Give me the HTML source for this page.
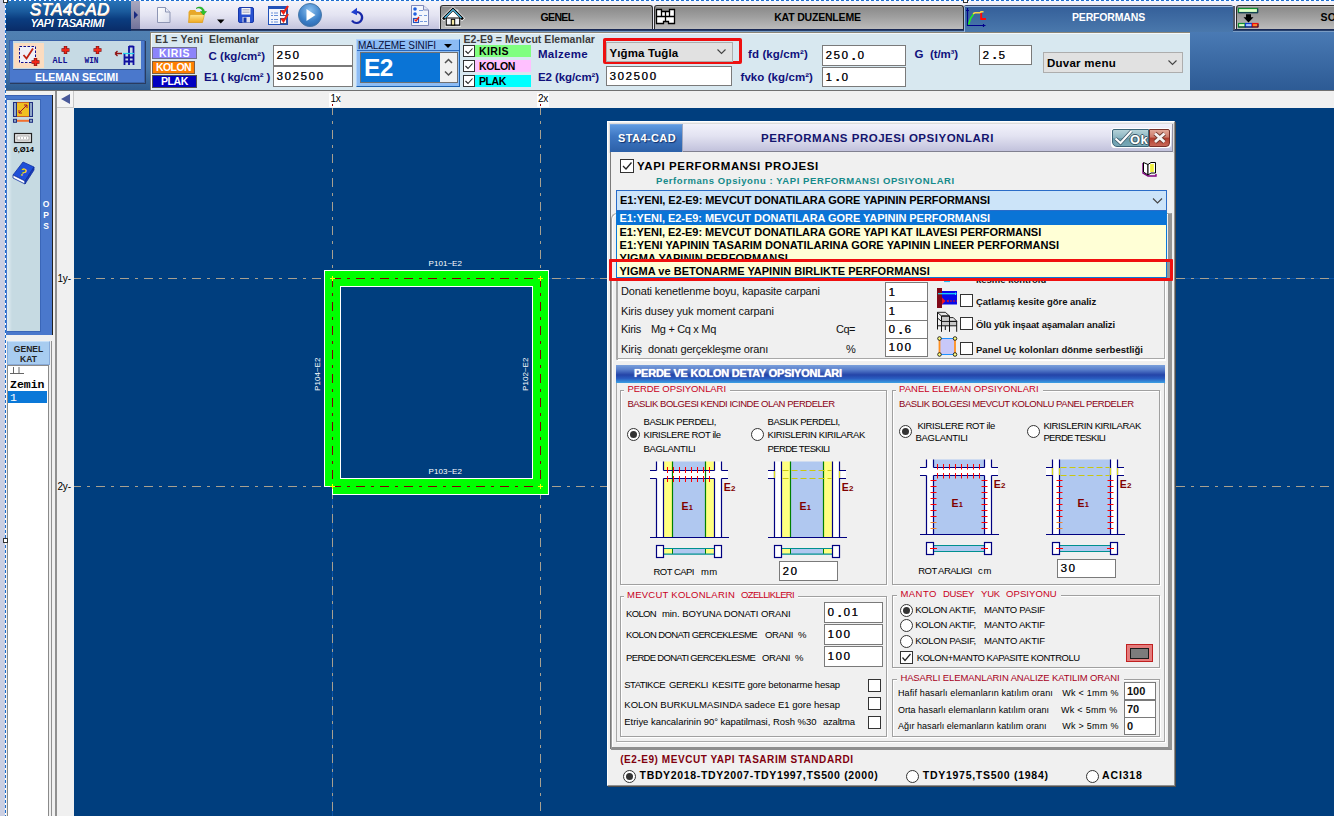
<!DOCTYPE html>
<html>
<head>
<meta charset="utf-8">
<title>STA4CAD</title>
<style>
*{box-sizing:border-box;margin:0;padding:0}
html,body{width:1334px;height:816px;overflow:hidden;background:#003a78;font-family:"Liberation Sans",sans-serif;font-size:11px;color:#000}
.a{position:absolute}
.t{position:absolute;white-space:nowrap;line-height:1}
.b{font-weight:bold}
.inp{position:absolute;background:#fff;border:1px solid #7a7a7a;font-family:"Liberation Sans",sans-serif;font-size:11.500px;letter-spacing:1.650px;line-height:1;white-space:nowrap;padding:0.800px 0 0 2.400px;display:flex;align-items:center;color:#111;text-shadow:0.3px 0 0 #333}
.inp i{font-style:normal;display:block;width:8px;text-align:center;letter-spacing:0;font-weight:bold;font-size:13px;margin-top:-1px}
.cb{position:absolute;width:12px;height:12px;background:#fff;border:1px solid #333}
.rd{position:absolute;width:13px;height:13px;background:#fff;border:1px solid #333;border-radius:50%}
.rd.on::after{content:"";position:absolute;left:2px;top:2px;width:7px;height:7px;border-radius:50%;background:#333}
.grp{position:absolute;border:1px solid #a0a0a0;box-shadow:1px 1px 0 #fff, inset 1px 1px 0 #fff}
.inp.sb{font-weight:bold;font-size:11px;padding:0 0 0 2px;letter-spacing:0;text-shadow:none}
.leg{position:absolute;background:#f0f0f0;color:#c00018;white-space:nowrap;line-height:1;padding:0 3px}
</style>
</head>
<body>
<!-- ================= TOP BAR ================= -->
<div class="a" id="top" style="left:0;top:0;width:1334px;height:91px;background:#3f6ea6"></div>
<div class="a" style="left:0;top:0;width:6px;height:816px;background:#cbcfe2"></div>
<div class="a" style="left:5px;top:0;width:1px;height:816px;background:repeating-linear-gradient(180deg,#1e6fd0 0 3px,#fff 3px 5px)"></div>
<div class="a" style="left:6px;top:0;width:1328px;height:1px;background:repeating-linear-gradient(90deg,#1e6fd0 0 3px,#fff 3px 5px)"></div>
<!-- logo -->
<div class="a" style="left:6px;top:1px;width:125px;height:30px;background:linear-gradient(180deg,#2a74b8 0%,#1a5a9c 35%,#0b3d80 60%,#0a2c68 100%)"></div>
<div class="t" style="left:29.500px;top:0.5px;font-size:17px;font-style:italic;color:#fff;letter-spacing:0.4px;text-shadow:0.5px 0 0 #fff,0.8px 0.6px 0 #e8c8a8">STA4CAD</div>
<div class="t" style="left:30.500px;top:17.500px;font-size:10.500px;font-style:italic;color:#fff;letter-spacing:-0.1px;text-shadow:0.3px 0 0 #fff">YAPI TASARIMI</div>
<div class="a" style="left:131px;top:1px;width:9px;height:29px;background:linear-gradient(180deg,#a8a8c0,#8888a8 60%,#70709a)"></div>
<div class="a" style="left:134px;top:11px;width:0;height:0;border-left:4px solid #1a2a80;border-top:4px solid transparent;border-bottom:4px solid transparent"></div>
<!-- icon toolbar -->
<div class="a" id="tb" style="left:140px;top:1px;width:300px;height:28px;background:linear-gradient(180deg,#f4f4fb 0%,#e4e4f2 50%,#c4c4de 100%)"></div>
<div class="a" style="left:131px;top:29px;width:1203px;height:2px;background:linear-gradient(180deg,#141e48,#2a4a78)"></div><div class="a" style="left:131px;top:31px;width:1203px;height:1px;background:#7a9cc4"></div>
<!-- tabs -->
<div class="a" id="tabs" style="left:440px;top:1px;width:894px;height:28px;background:linear-gradient(180deg,#f4f4fb 0%,#e4e4f2 50%,#c4c4de 100%)"></div>
<div class="a" style="left:440px;top:5px;width:213px;height:24px;border:1px solid #2c2c2c;border-bottom:0;border-radius:3px 3px 0 0;background:linear-gradient(180deg,#b4b4b4 0,#b4b4b4 1px,#8a8a8a 1px,#a0a0a0 50%,#bcbcbc);box-shadow:-1px 0 0 #e8e8f4,1px 0 0 #e8e8f4,0 -1px 0 #f4f4fa"></div>
<div class="a" style="left:654px;top:5px;width:310px;height:24px;border:1px solid #2c2c2c;border-bottom:0;border-radius:3px 3px 0 0;background:linear-gradient(180deg,#b4b4b4 0,#b4b4b4 1px,#8a8a8a 1px,#a0a0a0 50%,#bcbcbc);box-shadow:-1px 0 0 #e8e8f4,1px 0 0 #e8e8f4,0 -1px 0 #f4f4fa"></div>
<div class="a" style="left:964px;top:5px;width:269px;height:27px;border-top:1px solid #3a4a68;border-radius:2px 2px 0 0;background:linear-gradient(180deg,#98b8e0 0,#98b8e0 1px,#35609a 1px,#4a78ac 100%);box-shadow:inset 1px 0 0 #98b8e0"></div>
<div class="a" style="left:1236px;top:5px;width:104px;height:24px;border:1px solid #2c2c2c;border-bottom:0;border-radius:3px 3px 0 0;background:linear-gradient(180deg,#b4b4b4 0,#b4b4b4 1px,#8a8a8a 1px,#a0a0a0 50%,#bcbcbc);box-shadow:-1px 0 0 #e8e8f4,1px 0 0 #e8e8f4,0 -1px 0 #f4f4fa"></div>
<div class="a" style="left:1233px;top:6px;width:2px;height:24px;background:#505868"></div>
<!-- toolbar icons -->
<svg class="a" style="left:140px;top:0" width="300" height="32" viewBox="0 0 300 32">
<defs>
<linearGradient id="gdoc" x1="0" y1="0" x2="1" y2="1"><stop offset="0" stop-color="#fff"/><stop offset="1" stop-color="#d8dcec"/></linearGradient>
<linearGradient id="gfold" x1="0" y1="0" x2="0" y2="1"><stop offset="0" stop-color="#ffe890"/><stop offset="1" stop-color="#f0a820"/></linearGradient>
<radialGradient id="gplay" cx="0.5" cy="0.3" r="0.8"><stop offset="0" stop-color="#8cc0ee"/><stop offset="0.6" stop-color="#3c80c8"/><stop offset="1" stop-color="#2a60a8"/></radialGradient>
</defs>
<!-- new doc -->
<path d="M17.5 7.5 h8 l4.5 4.500 v10.500 h-12.500 z" fill="url(#gdoc)" stroke="#8e96b4" stroke-width="1"/>
<path d="M25.500 7.500 v4.500 h4.500" fill="#e8ecf8" stroke="#8e96b4" stroke-width="1"/>
<!-- folder -->
<path d="M48.500 12 l1.500 -2 h5 l1.500 2 h6 v10.500 h-14 z" fill="#e8a828"/>
<path d="M50 14.500 h14.500 l-2 8 h-14 z" fill="url(#gfold)" stroke="#d89818" stroke-width="0.600"/>
<path d="M56 8.500 c3 -1.500 6 0 6.500 3 h-2 l3 3.500 l3 -3.500 h-2 c-0.500 -4 -5 -6 -8.500 -3 z" fill="#28c828" stroke="#189018" stroke-width="0.500"/>
<path d="M77 19.500 h7.500 l-3.750 4 z" fill="#000"/>
<!-- save -->
<rect x="98.500" y="7.500" width="15" height="15" rx="1.500" fill="#2850d0" stroke="#1838a8"/>
<rect x="101.500" y="8" width="9" height="6.500" fill="#f4f4f8"/>
<path d="M102.500 9.500h7M102.500 11h7M102.500 12.500h7" stroke="#a8a8b8" stroke-width="0.700"/>
<rect x="102.500" y="17" width="7.500" height="5.500" fill="#e0e0ec"/>
<rect x="103.500" y="17.500" width="3" height="5" fill="#1838a8"/>
<!-- checklist -->
<rect x="128.500" y="6.500" width="19" height="18" fill="#f4f6fc" stroke="#2050b8"/>
<rect x="128" y="6" width="20" height="3" fill="#2050b8"/>
<path d="M131 13h2M134 13h4M131 15.500h2M134 15.500h4M131 19.500h2M134 19.500h4M131 22h2M134 22h4" stroke="#6890d8" stroke-width="1"/>
<rect x="140.500" y="10.500" width="6" height="5" fill="#fff" stroke="#405080"/>
<rect x="140.500" y="18.500" width="6" height="5" fill="#fff" stroke="#405080"/>
<path d="M141.500 10.500 l2 2.500 l4.500 -7" fill="none" stroke="#f02010" stroke-width="2.200"/>
<path d="M141.500 18.500 l2 2.500 l4.500 -7" fill="none" stroke="#f02010" stroke-width="2.200"/>
<!-- play -->
<circle cx="170" cy="15" r="11.500" fill="url(#gplay)" stroke="#4878a8" stroke-width="1"/>
<path d="M166.500 9 l9 6 l-9 6 z" fill="#fff"/>
<!-- undo -->
<path d="M216.500 12 a5.500 5.500 0 1 1 -4.500 8.500" fill="none" stroke="#1828a8" stroke-width="2.200"/>
<path d="M211 12.200 l6 -4.400 v7.500 z" fill="#2040d0"/>
<!-- checklist doc -->
<path d="M271.500 5.500 h12 l5 4.500 v15.500 h-17 z" fill="#f4f6fc" stroke="#8088b8"/>
<path d="M283.500 5.500 v4.500 h5" fill="#e0e4f4" stroke="#8088b8"/>
<circle cx="275" cy="9" r="1.800" fill="#2060e0"/><circle cx="275" cy="14" r="1.800" fill="#2060e0"/>
<path d="M279 10.500h4M279 15.500h3M284 15.500h3M280 21.500h3M284 21.500h3" stroke="#6890d8" stroke-width="0.900"/>
<rect x="273.500" y="18.500" width="5" height="4" fill="#fff" stroke="#2050c0" stroke-width="1.200"/>
<path d="M274.500 19.500 l1.500 1.500 l3 -4" fill="none" stroke="#f02010" stroke-width="1.300"/>
</svg>
<!-- tab icons -->
<svg class="a" style="left:440px;top:4px" width="30" height="26" viewBox="0 0 30 26">
<rect x="15" y="6" width="3" height="5" fill="#e8e8e8" stroke="#fff" stroke-width="0.600"/>
<path d="M6.200 14 h13.600 v7.200 h-13.600 z" fill="#fff" stroke="#fff" stroke-width="2.400"/>
<path d="M4 14.200 l9 -9 l9 9" fill="none" stroke="#fff" stroke-width="4.200" stroke-linecap="square"/>
<path d="M6.200 14 l6.800 -6.800 l6.800 6.800 z" fill="#fff"/><path d="M6.200 14 h13.600 v7.200 h-13.600 z" fill="#f4f6fa" stroke="#000" stroke-width="1.200"/>
<path d="M4 14.200 l9 -9 l9 9" fill="none" stroke="#000" stroke-width="2.800" stroke-linecap="square"/>
<path d="M4.600 14 l8.400 -8.400 l8.400 8.400" fill="none" stroke="#58c8f4" stroke-width="1.200"/>
<rect x="11.300" y="15.300" width="3.400" height="5.800" fill="#f4e8a0" stroke="#000" stroke-width="1"/>
</svg>
<svg class="a" style="left:654px;top:4px" width="30" height="26" viewBox="654 4 30 26">
<path d="M656.500 9.500H661.500V11.500H669.500V9.500H674.500V23.500H668.500V21.500H663.500V23.500H656.500Z" fill="#fff" stroke="#000" stroke-width="1.300"/>
<path d="M656.500 16.500H674.500M661.500 11.500V16.500M665.500 11.500V21.500M669.500 11.500V16.500" fill="none" stroke="#000" stroke-width="1.300"/>
</svg>
<svg class="a" style="left:964px;top:4px" width="30" height="28" viewBox="964 4 30 28">
<path d="M967.500 8V25.500H985.500M966 10.500h3M983.500 24v3" fill="none" stroke="#00008c" stroke-width="1.200"/>
<path d="M968.500 24.500 Q970 18 973.500 14" fill="none" stroke="#20f020" stroke-width="1.600"/>
<path d="M973 13.700 l2 -1 h5.500 l0.500 -1 h2.500" fill="none" stroke="#ffd848" stroke-width="1.600"/>
<path d="M981.200 13 V19 H986" fill="none" stroke="#ff0808" stroke-width="1.900"/>
</svg>
<svg class="a" style="left:1234px;top:4px" width="30" height="26" viewBox="1234 4 30 26">
<rect x="1238.500" y="8.500" width="19" height="4" fill="#e0ffc8" stroke="#109030" stroke-width="1.200"/>
<path d="M1238.500 12.800H1257.800V8.500" fill="none" stroke="#182860" stroke-width="1"/>
<path d="M1246 14.200h5v3h2.500l-5 5.200l-5 -5.200h2.500z" fill="#000"/>
<rect x="1238.500" y="23.500" width="6.500" height="3.500" fill="#e0ffc8" stroke="#109030" stroke-width="1.200"/>
<rect x="1245.500" y="23.500" width="6.500" height="3.500" fill="#a8c8ff" stroke="#1040d0" stroke-width="1.200"/>
<rect x="1252.500" y="23.500" width="5.500" height="3.500" fill="#ff8828" stroke="#e81010" stroke-width="1.200"/>
<path d="M1238.500 27H1258V24" fill="none" stroke="#101838" stroke-width="0.900"/>
</svg>
<!-- second row -->
<div class="a" style="left:6px;top:31px;width:144px;height:60px;background:linear-gradient(180deg,#5080b2 0%,#4a78aa 60%,#2c5a90 100%)"></div>
<div class="a" style="left:1190px;top:32px;width:144px;height:59px;background:linear-gradient(180deg,#4a7ab4,#2c5a94)"></div>
<div class="a" id="panel" style="left:150px;top:32px;width:1040px;height:58px;background:#d8e8f0;border-top:1px solid #8a8678;border-left:1px solid #8a8678;box-shadow:inset 1px 1px 0 #f4f8fa"></div>

<!-- ELEMAN SECIMI -->
<div class="a" style="left:9px;top:40px;width:136px;height:43px;background:#4a78cc;border:1px solid #3a62a8;box-shadow:1px 1px 0 #2a3c60"></div>
<div class="a" style="left:13px;top:41px;width:128px;height:29px;background:#c6dae4;border-bottom:1px solid #3a5a98"></div>
<div class="a" style="left:14px;top:43px;width:30px;height:25px;background:#fbdcc0"></div>
<svg class="a" style="left:13px;top:41px" width="129" height="29" viewBox="0 0 129 29">
<rect x="6.500" y="5.500" width="16" height="16" fill="#f0f0f8" stroke="#101090" stroke-dasharray="2.500 1.500"/>
<path d="M10.500 14 l3 3.500 l6.500 -10" fill="none" stroke="#c02010" stroke-width="1.800"/>
<path d="M22.500 17 v8 M18.500 21 h8" stroke="#801010" stroke-width="3.400"/>
<path d="M22.500 17.500 v7 M19 21 h7" stroke="#f02818" stroke-width="2"/>
<path d="M52.500 5 v8 M48.500 9 h8" stroke="#801010" stroke-width="3.400"/>
<path d="M52.500 5.500 v7 M49 9 h7" stroke="#f02818" stroke-width="2"/>
<path d="M84.500 5 v8 M80.500 9 h8" stroke="#801010" stroke-width="3.400"/>
<path d="M84.500 5.500 v7 M81 9 h7" stroke="#f02818" stroke-width="2"/>
<text x="39.500" y="22" font-family="Liberation Mono" font-size="9.500" font-weight="bold" fill="#101090" textLength="15" lengthAdjust="spacingAndGlyphs">ALL</text>
<text x="71.500" y="22" font-family="Liberation Mono" font-size="9.500" font-weight="bold" fill="#101090" textLength="14" lengthAdjust="spacingAndGlyphs">WIN</text>
<path d="M102 12.500 h7 M102 12.500 l2.500 -2.500 M102 12.500 l2.500 2.500" stroke="#901010" stroke-width="1.300" fill="none"/>
<path d="M111.500 24 v-12 M116 24 v-19 M120.500 24 v-19 M116 5.500 h4.500 M111 16.500 h10 M111 20.500 h10" stroke="#1010a0" stroke-width="1.800" fill="none"/>
<path d="M110 12.500 h11" stroke="#20d0e8" stroke-width="1.200"/>
</svg>
<!-- panel contents -->
<div class="a" style="left:152px;top:47px;width:45px;height:12px;background:#8c84fa;border:1px solid #707090"></div>
<div class="a" style="left:152px;top:61px;width:43px;height:13px;background:#ff7f00;border:1px solid #806040"></div>
<div class="a" style="left:152px;top:75px;width:45px;height:13px;background:#0000c0;border:1px solid #505050"></div>
<div class="inp" style="left:273px;top:45px;width:80px;height:21px">250</div>
<div class="inp" style="left:273px;top:66px;width:80px;height:21px">302500</div>
<!-- MALZEME SINIFI -->
<div class="a" style="left:356px;top:39px;width:104px;height:48px;background:#8cbcf4;border:1px solid #b4d4fc;border-bottom:1px solid #1a60b0;border-right:1px solid #1a60b0"></div>
<div class="a" style="left:357px;top:50px;width:102px;height:1px;background:#2a6ac0"></div>
<div class="a" style="left:444px;top:44px;width:0;height:0;border-top:4.500px solid #000;border-left:4.500px solid transparent;border-right:4.500px solid transparent"></div>
<div class="a" style="left:360px;top:52px;width:98px;height:31px;background:#0a74d6;border:1px solid #707070"></div>
<div class="a" style="left:440px;top:53px;width:17px;height:29px;background:#f0f0f0"></div>
<svg class="a" style="left:440px;top:53px" width="17" height="30"><path d="M5 10 l3.500 -3.500 l3.500 3.500 M5 18.500 l3.500 3.500 l3.500 -3.500" fill="none" stroke="#505050" stroke-width="1.500"/></svg>
<!-- E2-E9 -->
<div class="a" style="left:475px;top:45px;width:56px;height:12px;background:#80ff80"></div>
<div class="a" style="left:475px;top:60px;width:56px;height:12px;background:#ffc0ff"></div>
<div class="a" style="left:475px;top:75px;width:56px;height:12px;background:#00ffff"></div>
<div class="cb" style="left:463px;top:45px"></div><div class="cb" style="left:463px;top:60px"></div><div class="cb" style="left:463px;top:75px"></div>
<svg class="a" style="left:463px;top:45px" width="12" height="42"><path d="M2.500 6 l2.500 2.500 l4.500 -5 M2.500 21 l2.500 2.500 l4.500 -5 M2.500 36 l2.500 2.500 l4.500 -5" fill="none" stroke="#222" stroke-width="1.100"/></svg>
<div class="a" style="left:603px;top:38px;width:139px;height:26px;border:3px solid #ee1010;border-radius:2px"></div>
<div class="a" style="left:606px;top:42px;width:127px;height:20px;background:#e1e1e1;border:1px solid #adadad"></div>
<svg class="a" style="left:716px;top:47px" width="12" height="10"><path d="M1.500 2.500 l4 4 l4 -4" fill="none" stroke="#444" stroke-width="1.100"/></svg>
<div class="inp" style="left:606px;top:66px;width:126px;height:20px">302500</div>
<div class="inp" style="left:822px;top:45px;width:84px;height:21px">250<i>.</i>0</div>
<div class="inp" style="left:822px;top:67px;width:84px;height:20px">1<i>.</i>0</div>
<div class="inp" style="left:979px;top:45px;width:53px;height:20px">2<i>.</i>5</div>
<div class="a" style="left:1043px;top:52px;width:140px;height:21px;background:#e1e1e1;border:1px solid #adadad"></div>
<svg class="a" style="left:1167px;top:58px" width="12" height="10"><path d="M1.500 2.500 l4 4 l4 -4" fill="none" stroke="#444" stroke-width="1.100"/></svg>
<!--TOPTXT-->
<div class="t" style="left:155.0px;top:34.2px;font-size:10.5px;color:#3c3c3c;letter-spacing:0.20px;font-weight:bold">E1 = Yeni</div>
<div class="t" style="left:209.0px;top:34.2px;font-size:10.5px;color:#3c3c3c;letter-spacing:-0.02px;font-weight:bold">Elemanlar</div>
<div class="t" style="left:159.0px;top:47.7px;font-size:10.5px;color:#fff;letter-spacing:0.60px;font-weight:bold">KIRIS</div>
<div class="t" style="left:156.0px;top:62.2px;font-size:10.5px;color:#fff;letter-spacing:-0.58px;font-weight:bold">KOLON</div>
<div class="t" style="left:161.0px;top:76.2px;font-size:10.5px;color:#fff;letter-spacing:-0.40px;font-weight:bold">PLAK</div>
<div class="t" style="left:208.5px;top:51.2px;font-size:11.5px;color:#10107c;letter-spacing:0.03px;font-weight:bold">C (kg/cm²)</div>
<div class="t" style="left:204.0px;top:71.7px;font-size:11.5px;color:#10107c;letter-spacing:-0.18px;font-weight:bold">E1 ( kg/cm² )</div>
<div class="t" style="left:358.0px;top:40.9px;font-size:10px;color:#08103c;letter-spacing:-0.10px">MALZEME SINIFI</div>
<div class="t" style="left:364.0px;top:56.3px;font-size:24.5px;color:#fff;letter-spacing:-0.48px;font-weight:bold">E2</div>
<div class="t" style="left:463.5px;top:34.2px;font-size:10.5px;color:#3c3c3c;letter-spacing:0.04px;font-weight:bold">E2-E9 = Mevcut Elemanlar</div>
<div class="t" style="left:479.0px;top:45.7px;font-size:10.5px;color:#000;letter-spacing:0.40px;font-weight:bold">KIRIS</div>
<div class="t" style="left:479.0px;top:60.7px;font-size:10.5px;color:#000;letter-spacing:-0.38px;font-weight:bold">KOLON</div>
<div class="t" style="left:479.0px;top:75.7px;font-size:10.5px;color:#000;letter-spacing:-0.40px;font-weight:bold">PLAK</div>
<div class="t" style="left:538.0px;top:48.7px;font-size:11.5px;color:#10107c;letter-spacing:0.29px;font-weight:bold">Malzeme</div>
<div class="t" style="left:538.0px;top:72.2px;font-size:11.5px;color:#10107c;letter-spacing:-0.09px;font-weight:bold">E2 (kg/cm²)</div>
<div class="t" style="left:609.5px;top:48.0px;font-size:11.5px;color:#000;letter-spacing:0.12px;font-weight:bold">Yığma Tuğla</div>
<div class="t" style="left:748.0px;top:48.7px;font-size:11.5px;color:#10107c;letter-spacing:0.11px;font-weight:bold">fd (kg/cm²)</div>
<div class="t" style="left:740.5px;top:72.2px;font-size:11.5px;color:#10107c;letter-spacing:0.07px;font-weight:bold">fvko (kg/cm²)</div>
<div class="t" style="left:914.5px;top:48.7px;font-size:11.5px;color:#10107c;letter-spacing:0.55px;font-weight:bold">G</div>
<div class="t" style="left:930.0px;top:48.7px;font-size:11.5px;color:#10107c;letter-spacing:-0.12px;font-weight:bold">(t/m³)</div>
<div class="t" style="left:1047.0px;top:57.7px;font-size:11.5px;color:#000;letter-spacing:0.25px;font-weight:bold">Duvar menu</div>
<div class="t" style="left:1072.0px;top:12.0px;font-size:10.5px;color:#fff;letter-spacing:-0.17px;font-weight:bold">PERFORMANS</div>
<div class="t" style="left:1320.5px;top:12.0px;font-size:10.5px;color:#000;letter-spacing:0.16px;font-weight:bold">SO</div>
<div class="t" style="left:540.5px;top:12.0px;font-size:10.5px;color:#000;letter-spacing:-0.63px;font-weight:bold">GENEL</div>
<div class="t" style="left:774.2px;top:12.0px;font-size:10.5px;color:#000;letter-spacing:-0.19px;font-weight:bold">KAT DUZENLEME</div>
<div class="t" style="left:35.0px;top:71.7px;font-size:10.5px;color:#fff;letter-spacing:-0.03px;font-weight:bold">ELEMAN SECIMI</div>
<!--/TOPTXT-->
<!-- ================= WORK AREA ================= -->
<div class="a" style="left:6px;top:90px;width:1328px;height:18px;background:#f0f0f0;border-top:1px solid #707070"></div>
<div class="a" id="canvas" style="left:74px;top:108px;width:1260px;height:708px;background:#003e7e"></div>
<!-- left column -->
<div class="a" style="left:6px;top:91px;width:51px;height:725px;background:#f0f0f0"></div>
<div class="a" style="left:55px;top:91px;width:19px;height:725px;background:#f0f0f0;border-left:2px solid #909090"></div>
<div class="a" style="left:57px;top:91px;width:17px;height:17px;background:#f4f4f4;border:1px solid #c8c8c8;border-left:0;border-top:0"></div>
<div class="a" style="left:61px;top:94px;width:0;height:0;border-right:9.500px solid #4a5a9a;border-top:5.500px solid transparent;border-bottom:5.500px solid transparent"></div>
<div class="a" style="left:52px;top:95px;width:1px;height:240px;background:#202020"></div><div class="a" style="left:51px;top:341px;width:1px;height:475px;background:#909090"></div>
<!-- OPS -->
<div class="a" style="left:6px;top:95px;width:46px;height:240px;background:#4a78cc;border-top:1px solid #3a60b0"></div>
<div class="a" style="left:7px;top:99px;width:34px;height:233px;background:linear-gradient(90deg,#e4eef4 0,#c6dae2 5px,#c6dae2 100%);border:1px solid #3a66b8;border-left:0"></div>
<div class="t b" style="left:42px;top:199px;font-size:8.500px;color:#fff;line-height:11px;white-space:normal;width:8px;text-align:center">O P S</div>
<svg class="a" style="left:7px;top:99px" width="34" height="95" viewBox="0 0 34 95">
<rect x="6.500" y="3.500" width="19" height="14" fill="#f0c020" stroke="#c86020"/>
<rect x="6.500" y="3.500" width="3" height="14" fill="#90a8c8" stroke="#203080"/>
<rect x="22.500" y="3.500" width="3" height="14" fill="#90a8c8" stroke="#203080"/>
<path d="M12 14 l8 -8 M12 14 v-3 M12 14 h3 M20 6 v3 M20 6 h-3" stroke="#a01030" stroke-width="1" fill="none"/>
<path d="M9 21.800 h14" stroke="#f07030" stroke-width="2"/>
<rect x="6.500" y="20.300" width="3" height="3" fill="#90a8c8" stroke="#203080"/><rect x="22.500" y="20.300" width="3" height="3" fill="#90a8c8" stroke="#203080"/>
<rect x="7.500" y="34.500" width="17" height="9" fill="#e8e8e8" stroke="#222" stroke-width="1.200"/>
<rect x="10" y="37" width="12" height="4" fill="#fff" stroke="#999" stroke-width="0.800"/>
<path d="M13 39h1M16 39h1M19 39h1" stroke="#888" />
<text x="6.500" y="52.500" font-family="Liberation Sans" font-weight="bold" font-size="7.500" fill="#000">6,Ø14</text>
<path d="M6 76 l10 -13 l11 5 l-9 14 z" fill="#2050d8" stroke="#1030a0" stroke-width="0.800"/>
<path d="M6 76 l12 6 v3 l-12 -6 z" fill="#fff" stroke="#1030a0" stroke-width="0.800"/>
<path d="M18 82 l9 -14 v3 l-9 14 z" fill="#1838b8" stroke="#1030a0" stroke-width="0.800"/>
<text x="13" y="77" font-family="Liberation Sans" font-weight="bold" font-size="11" fill="#f0d020" transform="rotate(25 16 73)">?</text>
</svg>
<!-- GENEL KAT -->
<div class="a" style="left:7px;top:341px;width:43px;height:24px;background:#a8ccf0;border:1px solid #88aad8;border-top-color:#c8e0f8"></div>
<div class="t b" style="left:7px;top:344px;width:43px;text-align:center;font-size:8.500px;line-height:10px;white-space:normal;color:#222">GENEL KAT</div>
<div class="a" style="left:7px;top:365px;width:42px;height:451px;background:#fff;border:1px solid #8a8a8a;border-bottom:0"></div>
<div class="a" style="left:8px;top:391px;width:39px;height:12px;background:#0a78d8"></div>
<div class="t b" style="left:10px;top:379px;font-family:'Liberation Mono',monospace;font-size:11.500px;letter-spacing:0px">Zemin</div>
<div class="t" style="left:10px;top:392px;font-family:'Liberation Mono',monospace;font-size:11.500px;color:#fff">1</div>
<svg class="a" style="left:8px;top:366px" width="20" height="10"><path d="M2 7.500 h14 M5.500 1 v6.500 M11 1 v6.500" stroke="#555" stroke-width="0.900" fill="none"/></svg>
<div class="a" style="left:3px;top:538px;width:5px;height:5px;background:#fff;border:1px solid #333"></div>
<div class="a" style="left:3px;top:-2px;width:5px;height:5px;background:#fff;border:1px solid #333"></div>
<div class="a" style="left:963px;top:-2px;width:5px;height:5px;background:#fff;border:1px solid #333"></div>
<!-- ruler labels -->
<div class="a" style="left:329px;top:93px;width:11px;height:14px;background:#fff"></div><div class="a" style="left:332px;top:104px;width:1px;height:2px;background:#900"></div><div class="t" style="left:330.500px;top:93.500px;font-size:10px;letter-spacing:-0.3px">1x</div>
<div class="a" style="left:537px;top:93px;width:12px;height:14px;background:#fff"></div><div class="a" style="left:540px;top:104px;width:1px;height:2px;background:#900"></div><div class="t" style="left:538px;top:93.500px;font-size:10px;letter-spacing:-0.3px">2x</div>
<div class="t" style="left:57.500px;top:274px;font-size:10px;letter-spacing:-0.2px">1y-</div>
<div class="t" style="left:57.500px;top:482px;font-size:10px;letter-spacing:-0.2px">2y-</div>
<!-- canvas drawing -->
<svg class="a" style="left:74px;top:108px" width="1260" height="708" viewBox="74 108 1260 708" shape-rendering="crispEdges">
<g stroke="#0a52a4" stroke-width="1"><path d="M548 278.500H1334M332.500 494V816"/></g>
<g stroke="#a8a090" stroke-width="1" fill="none">
<path d="M74 278.500H1334" stroke-dasharray="9 6 3 6" stroke-dashoffset="2"/>
<path d="M74 486.500H1334" stroke-dasharray="9 6 3 6" stroke-dashoffset="2"/>
<path d="M332.500 108V816" stroke-dasharray="9 6 3 6" stroke-dashoffset="2"/>
<path d="M540.500 108V816" stroke-dasharray="9 6 3 6" stroke-dashoffset="2"/>
</g>
<path d="M324.500 270.500H548.500V494.500H332.500V486.500H324.500Z M340.500 286.500V478.500H532.500V286.500Z" fill="#00ff00" fill-rule="evenodd" stroke="#fff" stroke-width="1"/>
<g stroke="#800000" stroke-width="1" fill="none" stroke-dasharray="9 6 3 6">
<path d="M332 278.500H540"/><path d="M332 486.500H540"/><path d="M332.500 278V486"/><path d="M540.500 278V486"/>
</g>
<g stroke="#ffff00" stroke-width="1"><path d="M330 278.500h5M332.500 276v5M538 278.500h5M540.500 276v5M330 486.500h5M332.500 484v5M538 486.500h5M540.500 484v5"/></g>
</svg>
<div class="t" style="left:428.500px;top:259.500px;font-size:8px;color:#fff;letter-spacing:0.05px">P101~E2</div>
<div class="t" style="left:428.500px;top:467.500px;font-size:8px;color:#fff;letter-spacing:0.05px">P103~E2</div>
<div class="t" style="left:314px;top:391px;font-size:8px;color:#fff;letter-spacing:0.05px;transform:rotate(-90deg);transform-origin:0 0">P104~E2</div>
<div class="t" style="left:522px;top:391px;font-size:8px;color:#fff;letter-spacing:0.05px;transform:rotate(-90deg);transform-origin:0 0">P102~E2</div>
<!-- ================= DIALOG ================= -->
<!--DLG-->
<!-- dialog frame -->
<div class="a" style="left:607px;top:121px;width:568px;height:665px;background:#f0f0f0;border:1px solid #fff;border-right-color:#909090;border-bottom-color:#909090;box-shadow:1px 1px 0 #4c4c4c"></div>
<div class="a" style="left:609px;top:123px;width:565px;height:30px;border:1px solid #dcdcdc;border-bottom:0"></div>
<div class="a" style="left:610px;top:152px;width:1px;height:597px;background:#7a7a7a"></div>
<!-- title bar -->
<div class="a" style="left:611px;top:124px;width:562px;height:28px;border-right:1px solid #9090a0;background:linear-gradient(180deg,#f2f2fb 0%,#e2e2f1 45%,#c2c2dc 100%);border-bottom:1px solid #808090"></div>
<div class="a" style="left:610px;top:124px;width:73px;height:28px;background:linear-gradient(180deg,#5f9ae0 0%,#3f78c4 40%,#2c60a8 100%);border-right:1px solid #a0a8c0;border-top:1px solid #78a8e4"></div>
<!-- OK / X -->
<div class="a" style="left:1111px;top:128px;width:60px;height:20px;border:1px solid #fff;border-radius:3px;background:#fff"></div>
<div class="a" style="left:1112px;top:129px;width:37px;height:18px;border:1px solid #3c6478;border-radius:2px 0 0 5px;background:linear-gradient(180deg,#b4d2d8 0%,#8ab4c0 50%,#6a9cac 51%,#78a8b6 100%)"></div>
<div class="a" style="left:1149px;top:129px;width:21px;height:18px;border:1px solid #783028;border-radius:0 2px 4px 0;background:linear-gradient(180deg,#e0a898 0%,#cc7868 45%,#b03c2c 50%,#c86858 100%)"></div>
<svg class="a" style="left:1112px;top:128px" width="60" height="20" viewBox="0 0 60 20">
<path d="M3.500 10.500 l5 4.500 l11 -12" fill="none" stroke="#3c5868" stroke-width="3.400"/>
<path d="M3.500 10.500 l5 4.500 l11 -12" fill="none" stroke="#fff" stroke-width="2"/>
<path d="M43 5.500 l9.500 8.500 M52.500 5.500 l-9.500 8.500" stroke="#70382c" stroke-width="4.400"/>
<path d="M43 5.500 l9.500 8.500 M52.500 5.500 l-9.500 8.500" stroke="#f4f4f4" stroke-width="2.800"/>
</svg>
<div class="t b" style="left:1130px;top:133px;font-size:13px;color:#fff;letter-spacing:0.3px;text-shadow:1px 0 0 #3c5868,-1px 0 0 #3c5868,0 1px 0 #3c5868,0 -1px 0 #3c5868">Ok</div>
<!-- checkbox + book -->
<div class="cb" style="left:620px;top:159px;width:14px;height:14px;border-color:#333"></div>
<svg class="a" style="left:620px;top:159px" width="14" height="14"><path d="M3 7 l3 3 l5.500 -6.500" fill="none" stroke="#222" stroke-width="1.300"/></svg>
<svg class="a" style="left:1140px;top:160px" width="20" height="18" viewBox="0 0 20 18">
<path d="M3 3 v10 l5 3 h8 v-2" fill="none" stroke="#800080" stroke-width="1.400"/>
<path d="M3.500 2.500 l4.500 2 v10.500 l-4.500 -3 z" fill="#fff" stroke="#000" stroke-width="1"/>
<path d="M8 4.500 l3 -2 h4.500 v10.500 h-4.500 l-3 2 z" fill="#fff" stroke="#000" stroke-width="1"/>
<rect x="10" y="4" width="4" height="8" fill="#ffff60"/>
<path d="M10.500 5h3M10.500 7h3M10.500 9h3M10.500 11h3" stroke="#c8c800" stroke-width="0.600"/>
</svg>
<!-- upper group frame -->
<div class="a" style="left:611px;top:213px;width:561px;height:537px;border:1px solid #a0a0a0;border-right:4px solid #949494;border-bottom:3px solid #8e8e8e;border-radius:6px 0 0 0;box-shadow:inset 1px 1px 0 #fff"></div>
<div class="a" style="left:616px;top:216px;width:549px;height:144px;border:1px solid #a8a8a8;border-radius:5px 5px 0 0;box-shadow:1px 1px 0 #fff"></div>
<div class="a" style="left:617px;top:281px;width:548px;height:78px;border:1px solid #a8a8a8;border-top:0;box-shadow:1px 1px 0 #fff"></div>
<!-- combobox -->
<div class="a" style="left:616px;top:190px;width:551px;height:21px;background:#cce4f9;border:1px solid #2a6cc8"></div>
<svg class="a" style="left:1151px;top:196px" width="14" height="10"><path d="M2 2.500 l4.500 4.500 l4.500 -4.500" fill="none" stroke="#444" stroke-width="1.100"/></svg>
<!-- inputs (behind dropdown) -->
<div class="inp" style="left:885px;top:282px;width:43px;height:20px">1</div>
<div class="inp" style="left:885px;top:301px;width:43px;height:20px">1</div>
<div class="inp" style="left:885px;top:320px;width:43px;height:19px">0<i>.</i>6</div>
<div class="inp" style="left:885px;top:338px;width:43px;height:19px">100</div>
<div class="t b" style="left:976px;top:275px;font-size:9.500px;color:#111">kesme kontrolu</div>
<svg class="a" style="left:936px;top:276px" width="24" height="82" viewBox="936 276 24 82">
<rect x="937" y="288" width="5" height="20" fill="#800818"/>
<rect x="942" y="291" width="15" height="13.500" fill="#0808e8"/>
<path d="M938 293.700h18.500" stroke="#20e0f8" stroke-width="1.200"/><path d="M955.500 292.500v2.500" stroke="#20e0f8" stroke-width="1"/>
<path d="M942 297.500 l3.500 3.500 l-3.500 3.500z" fill="#f01020"/><path d="M947 301h10" stroke="#e01020" stroke-width="1" stroke-dasharray="2 1"/><path d="M946.500 301l2 -1.500v3z" fill="#e01020"/>
<path d="M941.500 316h8v4.800h-8zM941.500 322h15.200v3.600h-15.200z" fill="#c8c8c8"/>
<path d="M937.300 312.300h8l4.200 3.700h-8z M949.500 317.600h3.800l3.700 3.800h-7.500z" fill="#e4e4e4" stroke="#111" stroke-width="0.900"/>
<g fill="none" stroke="#111" stroke-width="1"><path d="M937.500 312.300V329.500M941.500 316V331.800M949.500 316V331.800M956.700 321.400V331.800M941.500 316H949.500M941.500 321.400H956.700M937.500 318l4 3.400M937.500 325.800H956.700M945.300 326v4"/></g>
<rect x="939.500" y="338.500" width="15.500" height="16" fill="#c8c8f8"/>
<path d="M939.500 338.500h15.500M939.500 354.500h15.500" stroke="#2090ff" stroke-width="1.200"/>
<path d="M939.500 338.500v16M955 338.500v16" stroke="#ff9020" stroke-width="1.800"/>
<g fill="#ffff80" stroke="#000" stroke-width="0.800"><circle cx="939.500" cy="338.500" r="1.800"/><circle cx="955" cy="338.500" r="1.800"/><circle cx="939.500" cy="354.500" r="1.800"/><circle cx="955" cy="354.500" r="1.800"/></g>
<path d="M944 281.500 h6" stroke="#20c0f8" stroke-width="1.200"/>
</svg>
<div class="cb" style="left:960px;top:294px;width:13px;height:13px"></div>
<div class="cb" style="left:960px;top:317px;width:13px;height:13px"></div>
<div class="cb" style="left:960px;top:342px;width:13px;height:13px"></div>
<!-- dropdown list -->
<div class="a" style="left:616px;top:211px;width:551px;height:68px;background:#ffffd6;border:1px solid #0a78d8;border-top:0"></div>
<div class="a" style="left:617px;top:211px;width:549px;height:14px;background:#0a74d6"></div>
<!-- section header -->
<div class="a" style="left:616px;top:365px;width:549px;height:18px;background:linear-gradient(180deg,#7aa0dc 0%,#5a80cc 25%,#2444a8 55%,#2a5cc0 75%,#3ca0e4 100%)"></div>
<!-- group frames -->
<div class="grp" style="left:620px;top:390px;width:267px;height:195px"></div>
<div class="grp" style="left:892px;top:390px;width:268px;height:195px"></div>
<div class="grp" style="left:620px;top:596px;width:267px;height:141px"></div>
<div class="grp" style="left:892px;top:595px;width:268px;height:73px"></div>
<div class="grp" style="left:892px;top:679px;width:268px;height:58px"></div>
<div class="a" style="left:616px;top:383px;width:549px;height:359px;border:1px solid #a8a8a8;border-top:0;box-shadow:1px 1px 0 #fff"></div>
<!-- radios -->
<div class="rd on" style="left:627px;top:428px"></div>
<div class="rd" style="left:751px;top:428px"></div>
<div class="rd on" style="left:899px;top:425px"></div>
<div class="rd" style="left:1027px;top:425px"></div>
<div class="rd on" style="left:900px;top:604px"></div>
<div class="rd" style="left:900px;top:619px"></div>
<div class="rd" style="left:900px;top:635px"></div>
<div class="rd on" style="left:623px;top:770px"></div>
<div class="rd" style="left:906px;top:770px"></div>
<div class="rd" style="left:1086px;top:770px"></div>
<!-- inputs -->
<div class="inp" style="left:779px;top:561px;width:59px;height:20px">20</div>
<div class="inp" style="left:1057px;top:559px;width:59px;height:19px">30</div>
<div class="inp" style="left:824px;top:602px;width:59px;height:21px">0<i>.</i>01</div>
<div class="inp" style="left:824px;top:624px;width:59px;height:21px">100</div>
<div class="inp" style="left:824px;top:646px;width:59px;height:21px">100</div>
<div class="cb" style="left:868px;top:679px;width:13px;height:13px"></div>
<div class="cb" style="left:868px;top:697px;width:13px;height:13px"></div>
<div class="cb" style="left:868px;top:716px;width:13px;height:13px"></div>
<div class="cb" style="left:900px;top:651px;width:13px;height:13px"></div>
<svg class="a" style="left:900px;top:651px" width="13" height="13"><path d="M2.500 6.500 l2.500 3 l5.500 -6.500" fill="none" stroke="#222" stroke-width="1.200"/></svg>
<div class="a" style="left:1126px;top:644px;width:27px;height:18px;background:#e47c7c;border:1px solid #c02020"></div>
<div class="a" style="left:1130px;top:648px;width:19px;height:11px;background:#7c7c7c;border:1px solid #1c1c1c"></div>
<div class="inp sb" style="left:1124px;top:682px;width:32px;height:18px">100</div>
<div class="inp sb" style="left:1124px;top:700px;width:32px;height:18px">70</div>
<div class="inp sb" style="left:1124px;top:717px;width:32px;height:18px">0</div>
<svg class="a" style="left:640px;top:450px" width="520" height="115" viewBox="640 450 520 115">
<rect x="656.5" y="461.5" width="7.0" height="76.0" fill="#fff"/>
<rect x="714.5" y="461.5" width="7.0" height="76.0" fill="#fff"/>
<rect x="663.5" y="461.5" width="9.0" height="76.0" fill="#ffff80"/>
<rect x="705.5" y="461.5" width="9.0" height="76.0" fill="#ffff80"/>
<rect x="672.5" y="461.5" width="33.0" height="76.0" fill="#b0c8f0"/>
<rect x="650" y="470.5" width="78" height="8.0" fill="#fff"/>
<path d="M672.5 461.5V537.5M705.5 461.5V537.5" stroke="#008000" stroke-width="1.200" fill="none"/>
<path d="M656.5 461.5V470.5M656.5 478.5V537.5M721.5 461.5V470.5M721.5 478.5V537.5M663.5 461.5V470.5M663.5 478.5V537.5M714.5 461.5V470.5M714.5 478.5V537.5" stroke="#000080" stroke-width="1.200" fill="none"/>
<path d="M650 470.5H656.5M650 478.5H656.5M663.5 470.5H714.5M663.5 478.5H714.5M721.5 470.5H728M721.5 478.5H728" stroke="#000080" stroke-width="1.200" fill="none"/>
<path d="M667.5 467V473M667.5 476V482" stroke="#ff0000" stroke-width="1"/>
<path d="M673.5 467V473M673.5 476V482" stroke="#ff0000" stroke-width="1"/>
<path d="M679.5 467V473M679.5 476V482" stroke="#ff0000" stroke-width="1"/>
<path d="M685.5 467V473M685.5 476V482" stroke="#ff0000" stroke-width="1"/>
<path d="M691.5 467V473M691.5 476V482" stroke="#ff0000" stroke-width="1"/>
<path d="M697.5 467V473M697.5 476V482" stroke="#ff0000" stroke-width="1"/>
<path d="M703.5 467V473M703.5 476V482" stroke="#ff0000" stroke-width="1"/>
<path d="M709.5 467V473M709.5 476V482" stroke="#ff0000" stroke-width="1"/>
<path d="M650 537.5H729" stroke="#000080" stroke-width="1.200"/>
<rect x="663.5" y="548.5" width="9.0" height="5.500" fill="#ffff80"/><rect x="705.5" y="548.5" width="9.0" height="5.500" fill="#ffff80"/><rect x="672.5" y="548.5" width="33.0" height="5.500" fill="#b0c8f0"/>
<path d="M672.5 548.5V554M705.5 548.5V554" stroke="#008000" stroke-width="1"/>
<path d="M663.5 548.5H714.5M663.5 554.2H714.5" stroke="#009090" stroke-width="1.200"/>
<rect x="656.5" y="545.5" width="7.0" height="12" fill="#fff" stroke="#000080" stroke-width="1.200"/><rect x="714.5" y="545.5" width="7.0" height="12" fill="#fff" stroke="#000080" stroke-width="1.200"/>
<text x="681.5" y="510.3" font-family="Liberation Sans" font-weight="bold" font-size="10.500" fill="#800000">E<tspan font-size="7.500" dx="0.300">1</tspan></text>
<text x="723.7" y="491.3" font-family="Liberation Sans" font-weight="bold" font-size="10.500" fill="#800000">E<tspan font-size="8" dx="0.300">2</tspan></text>
<rect x="774.5" y="461.5" width="7.0" height="76.0" fill="#fff"/>
<rect x="832.5" y="461.5" width="7.0" height="76.0" fill="#fff"/>
<rect x="781.5" y="461.5" width="9.0" height="76.0" fill="#ffff80"/>
<rect x="823.5" y="461.5" width="9.0" height="76.0" fill="#ffff80"/>
<rect x="790.5" y="461.5" width="33.0" height="76.0" fill="#b0c8f0"/>
<rect x="768" y="470.5" width="6.5" height="8.0" fill="#fff"/>
<rect x="839.5" y="470.5" width="6.5" height="8.0" fill="#fff"/>
<path d="M790.5 461.5V537.5M823.5 461.5V537.5" stroke="#008000" stroke-width="1.200" fill="none"/>
<path d="M774.5 461.5V537.5M839.5 461.5V537.5M781.5 461.5V537.5M832.5 461.5V537.5" stroke="#000080" stroke-width="1.200" fill="none"/>
<path d="M768 470.5H774.5M768 478.5H774.5M839.5 470.5H846M839.5 478.5H846" stroke="#000080" stroke-width="1.200" fill="none"/>
<path d="M774.5 471.0V478.0M839.5 471.0V478.0" stroke="#d8d820" stroke-width="1.200"/>
<path d="M782.5 470.5H831.5M782.5 478.5H831.5" stroke="#c8c810" stroke-width="1" stroke-dasharray="6 3" fill="none"/>
<path d="M768 537.5H847" stroke="#000080" stroke-width="1.200"/>
<rect x="781.5" y="548.5" width="9.0" height="5.500" fill="#ffff80"/><rect x="823.5" y="548.5" width="9.0" height="5.500" fill="#ffff80"/><rect x="790.5" y="548.5" width="33.0" height="5.500" fill="#b0c8f0"/>
<path d="M790.5 548.5V554M823.5 548.5V554" stroke="#008000" stroke-width="1"/>
<path d="M781.5 548.5H832.5M781.5 554.2H832.5" stroke="#009090" stroke-width="1.200"/>
<rect x="774.5" y="545.5" width="7.0" height="12" fill="#fff" stroke="#000080" stroke-width="1.200"/><rect x="832.5" y="545.5" width="7.0" height="12" fill="#fff" stroke="#000080" stroke-width="1.200"/>
<text x="799.5" y="510.3" font-family="Liberation Sans" font-weight="bold" font-size="10.500" fill="#800000">E<tspan font-size="7.500" dx="0.300">1</tspan></text>
<text x="841.7" y="491.3" font-family="Liberation Sans" font-weight="bold" font-size="10.500" fill="#800000">E<tspan font-size="8" dx="0.300">2</tspan></text>
<rect x="926.5" y="459.5" width="7.0" height="75.0" fill="#fff"/><rect x="984.5" y="459.5" width="7.0" height="75.0" fill="#fff"/>
<rect x="933.5" y="459.5" width="51.0" height="75.0" fill="#b0c8f0"/>
<rect x="920" y="467.5" width="78" height="8.0" fill="#fff"/>
<path d="M926.5 459.5V467.5M926.5 475.5V534.5M991.5 459.5V467.5M991.5 475.5V534.5M933.5 459.5V467.5M933.5 475.5V534.5M984.5 459.5V467.5M984.5 475.5V534.5" stroke="#000080" stroke-width="1.200" fill="none"/>
<path d="M920 467.5H926.5M920 475.5H926.5M933.5 467.5H984.5M933.5 475.5H984.5M991.5 467.5H998M991.5 475.5H998" stroke="#000080" stroke-width="1.200" fill="none"/>
<path d="M937.5 464V469.500M937.5 473V478.500" stroke="#ff0000" stroke-width="1"/>
<path d="M943.5 464V469.500M943.5 473V478.500" stroke="#ff0000" stroke-width="1"/>
<path d="M949.5 464V469.500M949.5 473V478.500" stroke="#ff0000" stroke-width="1"/>
<path d="M955.5 464V469.500M955.5 473V478.500" stroke="#ff0000" stroke-width="1"/>
<path d="M961.5 464V469.500M961.5 473V478.500" stroke="#ff0000" stroke-width="1"/>
<path d="M967.5 464V469.500M967.5 473V478.500" stroke="#ff0000" stroke-width="1"/>
<path d="M973.5 464V469.500M973.5 473V478.500" stroke="#ff0000" stroke-width="1"/>
<path d="M979.5 464V469.500M979.5 473V478.500" stroke="#ff0000" stroke-width="1"/>
<path d="M930.5 480.5H936.5" stroke="#ff0000" stroke-width="1"/><path d="M981.5 480.5H987.5" stroke="#ff0000" stroke-width="1"/>
<path d="M930.5 486.5H936.5" stroke="#ff0000" stroke-width="1"/><path d="M981.5 486.5H987.5" stroke="#ff0000" stroke-width="1"/>
<path d="M930.5 492.5H936.5" stroke="#ff0000" stroke-width="1"/><path d="M981.5 492.5H987.5" stroke="#ff0000" stroke-width="1"/>
<path d="M930.5 498.5H936.5" stroke="#ff0000" stroke-width="1"/><path d="M981.5 498.5H987.5" stroke="#ff0000" stroke-width="1"/>
<path d="M930.5 504.5H936.5" stroke="#ff0000" stroke-width="1"/><path d="M981.5 504.5H987.5" stroke="#ff0000" stroke-width="1"/>
<path d="M930.5 510.5H936.5" stroke="#ff0000" stroke-width="1"/><path d="M981.5 510.5H987.5" stroke="#ff0000" stroke-width="1"/>
<path d="M930.5 516.5H936.5" stroke="#ff0000" stroke-width="1"/><path d="M981.5 516.5H987.5" stroke="#ff0000" stroke-width="1"/>
<path d="M930.5 522.5H936.5" stroke="#f08030" stroke-width="1"/><path d="M981.5 522.5H987.5" stroke="#ff0000" stroke-width="1"/>
<path d="M930.5 528.5H936.5" stroke="#f08030" stroke-width="1"/><path d="M981.5 528.5H987.5" stroke="#ff0000" stroke-width="1"/>
<path d="M920 534.5H999" stroke="#000080" stroke-width="1.200"/>
<rect x="933.5" y="545.5" width="51.0" height="6" fill="#b0c8f0"/>
<path d="M933.5 545.5H984.5M933.5 551.5H984.5" stroke="#009090" stroke-width="1.200"/>
<rect x="926.5" y="542.5" width="7.0" height="12" fill="#fff" stroke="#000080" stroke-width="1.200"/><rect x="984.5" y="542.5" width="7.0" height="12" fill="#fff" stroke="#000080" stroke-width="1.200"/>
<path d="M930.0 548.5H937.0M981.0 548.5H988.0" stroke="#ff0000" stroke-width="1"/>
<text x="951.5" y="507.3" font-family="Liberation Sans" font-weight="bold" font-size="10.500" fill="#800000">E<tspan font-size="7.500" dx="0.300">1</tspan></text>
<text x="993.7" y="488.3" font-family="Liberation Sans" font-weight="bold" font-size="10.500" fill="#800000">E<tspan font-size="8" dx="0.300">2</tspan></text>
<rect x="1052.5" y="459.5" width="7.0" height="75.0" fill="#fff"/><rect x="1110.5" y="459.5" width="7.0" height="75.0" fill="#fff"/>
<rect x="1059.5" y="459.5" width="51.0" height="75.0" fill="#b0c8f0"/>
<rect x="1046" y="467.5" width="6.5" height="8.0" fill="#fff"/><rect x="1117.5" y="467.5" width="6.5" height="8.0" fill="#fff"/>
<path d="M1052.5 459.5V534.5M1117.5 459.5V534.5M1059.5 459.5V534.5M1110.5 459.5V534.5" stroke="#000080" stroke-width="1.200" fill="none"/>
<path d="M1046 467.5H1052.5M1046 475.5H1052.5M1117.5 467.5H1124M1117.5 475.5H1124" stroke="#000080" stroke-width="1.200" fill="none"/>
<path d="M1052.5 468.0V475.0M1117.5 468.0V475.0M1059.5 468.0V475.0M1110.5 468.0V475.0" stroke="#d8d820" stroke-width="1.200"/>
<path d="M1060.5 467.5H1109.5M1060.5 475.5H1109.5" stroke="#c8c810" stroke-width="1" stroke-dasharray="6 3" fill="none"/>
<path d="M1056.5 480.5H1062.5" stroke="#ff0000" stroke-width="1"/><path d="M1107.5 480.5H1113.5" stroke="#ff0000" stroke-width="1"/>
<path d="M1056.5 486.5H1062.5" stroke="#ff0000" stroke-width="1"/><path d="M1107.5 486.5H1113.5" stroke="#ff0000" stroke-width="1"/>
<path d="M1056.5 492.5H1062.5" stroke="#ff0000" stroke-width="1"/><path d="M1107.5 492.5H1113.5" stroke="#ff0000" stroke-width="1"/>
<path d="M1056.5 498.5H1062.5" stroke="#ff0000" stroke-width="1"/><path d="M1107.5 498.5H1113.5" stroke="#ff0000" stroke-width="1"/>
<path d="M1056.5 504.5H1062.5" stroke="#ff0000" stroke-width="1"/><path d="M1107.5 504.5H1113.5" stroke="#ff0000" stroke-width="1"/>
<path d="M1056.5 510.5H1062.5" stroke="#ff0000" stroke-width="1"/><path d="M1107.5 510.5H1113.5" stroke="#ff0000" stroke-width="1"/>
<path d="M1056.5 516.5H1062.5" stroke="#ff0000" stroke-width="1"/><path d="M1107.5 516.5H1113.5" stroke="#ff0000" stroke-width="1"/>
<path d="M1056.5 522.5H1062.5" stroke="#f08030" stroke-width="1"/><path d="M1107.5 522.5H1113.5" stroke="#ff0000" stroke-width="1"/>
<path d="M1056.5 528.5H1062.5" stroke="#f08030" stroke-width="1"/><path d="M1107.5 528.5H1113.5" stroke="#ff0000" stroke-width="1"/>
<path d="M1046 534.5H1125" stroke="#000080" stroke-width="1.200"/>
<rect x="1059.5" y="545.5" width="51.0" height="6" fill="#b0c8f0"/>
<path d="M1059.5 545.5H1110.5M1059.5 551.5H1110.5" stroke="#009090" stroke-width="1.200"/>
<rect x="1052.5" y="542.5" width="7.0" height="12" fill="#fff" stroke="#000080" stroke-width="1.200"/><rect x="1110.5" y="542.5" width="7.0" height="12" fill="#fff" stroke="#000080" stroke-width="1.200"/>
<path d="M1056.0 548.5H1063.0M1107.0 548.5H1114.0" stroke="#ff0000" stroke-width="1"/>
<text x="1077.5" y="507.3" font-family="Liberation Sans" font-weight="bold" font-size="10.500" fill="#800000">E<tspan font-size="7.500" dx="0.300">1</tspan></text>
<text x="1119.7" y="488.3" font-family="Liberation Sans" font-weight="bold" font-size="10.500" fill="#800000">E<tspan font-size="8" dx="0.300">2</tspan></text>
</svg>
<div class="t" style="left:618.0px;top:133.4px;font-size:11px;color:#fff;letter-spacing:0.40px;font-weight:bold;text-shadow:1px 1px 1px #10306a">STA4-CAD</div>
<div class="t" style="left:761.0px;top:133.2px;font-size:11.5px;color:#14146e;letter-spacing:0.52px;font-weight:bold">PERFORMANS PROJESI OPSIYONLARI</div>
<div class="t" style="left:637.0px;top:160.7px;font-size:11.5px;color:#000;letter-spacing:0.62px;font-weight:bold">YAPI PERFORMANSI PROJESI</div>
<div class="t" style="left:656.0px;top:175.7px;font-size:9.5px;color:#158a8a;letter-spacing:0.58px;font-weight:bold">Performans Opsiyonu : YAPI PERFORMANSI OPSIYONLARI</div>
<div class="t" style="left:620.0px;top:195.4px;font-size:11px;color:#000;letter-spacing:-0.06px;font-weight:bold">E1:YENI, E2-E9: MEVCUT DONATILARA GORE YAPININ PERFORMANSI</div>
<div class="t" style="left:619.5px;top:213.4px;font-size:11px;color:#fff;letter-spacing:-0.05px;font-weight:bold">E1:YENI, E2-E9: MEVCUT DONATILARA GORE YAPININ PERFORMANSI</div>
<div class="t" style="left:619.5px;top:226.9px;font-size:11px;color:#000;letter-spacing:-0.04px;font-weight:bold">E1:YENI, E2-E9: MEVCUT DONATILARA GORE YAPI KAT ILAVESI PERFORMANSI</div>
<div class="t" style="left:619.5px;top:239.9px;font-size:11px;color:#000;letter-spacing:0.04px;font-weight:bold">E1:YENI YAPININ TASARIM DONATILARINA GORE YAPININ LINEER PERFORMANSI</div>
<div class="t" style="left:619.5px;top:252.9px;font-size:11px;color:#000;letter-spacing:0.08px;font-weight:bold">YIGMA YAPININ PERFORMANSI</div>
<div class="a" style="left:612px;top:262px;width:5px;height:16px;background:#f0f0f0"></div><div class="a" style="left:616px;top:262px;width:551px;height:16px;background:#ffffd6;border-left:1px solid #0a78d8;border-right:1px solid #0a78d8;border-bottom:1px solid #0a78d8"></div><div class="a" style="left:1167px;top:262px;width:4px;height:16px;background:#949494"></div><div class="a" style="left:609px;top:259px;width:564px;height:22px;border:3px solid #f01010;border-radius:1px"></div>
<div class="t" style="left:619.5px;top:265.6px;font-size:11px;color:#000;letter-spacing:0.02px;font-weight:bold">YIGMA ve BETONARME YAPININ BIRLIKTE PERFORMANSI</div>
<div class="t" style="left:621.0px;top:286.4px;font-size:11px;color:#111;letter-spacing:-0.15px">Donati kenetlenme boyu, kapasite carpani</div>
<div class="t" style="left:621.0px;top:306.4px;font-size:11px;color:#111;letter-spacing:-0.10px">Kiris dusey yuk moment carpani</div>
<div class="t" style="left:621.0px;top:324.4px;font-size:11px;color:#111;letter-spacing:-0.28px">Kiris</div>
<div class="t" style="left:651.0px;top:324.4px;font-size:11px;color:#111;letter-spacing:-0.32px">Mg + Cq x Mq</div>
<div class="t" style="left:836.0px;top:324.4px;font-size:11px;color:#111;letter-spacing:-0.50px">Cq=</div>
<div class="t" style="left:621.0px;top:344.4px;font-size:11px;color:#111;letter-spacing:-0.08px">Kiriş</div>
<div class="t" style="left:648.0px;top:344.4px;font-size:11px;color:#111;letter-spacing:-0.17px">donatı gerçekleşme oranı</div>
<div class="t" style="left:846.0px;top:344.4px;font-size:11px;color:#111;letter-spacing:0.22px">%</div>
<div class="t" style="left:976.0px;top:296.7px;font-size:9.5px;color:#111;letter-spacing:-0.05px;font-weight:bold">Çatlamış kesite göre analiz</div>
<div class="t" style="left:976.0px;top:319.7px;font-size:9.5px;color:#111;letter-spacing:-0.13px;font-weight:bold">Ölü yük inşaat aşamaları analizi</div>
<div class="t" style="left:976.0px;top:344.7px;font-size:9.5px;color:#111;letter-spacing:0.02px;font-weight:bold">Panel Uç kolonları dönme serbestliği</div>
<div class="t" style="left:634.0px;top:368.4px;font-size:11px;color:#fff;letter-spacing:-0.24px;font-weight:bold;text-shadow:0 0 1px #fff">PERDE VE KOLON DETAY OPSIYONLARI</div>
<div class="t" style="left:627.4px;top:399.2px;font-size:9.5px;color:#8c0014;letter-spacing:-0.47px">BASLIK BOLGESI KENDI ICINDE OLAN PERDELER</div>
<div class="t" style="left:643.5px;top:417.4px;font-size:9.5px;color:#000;letter-spacing:-0.45px">BASLIK PERDELI,</div>
<div class="t" style="left:643.5px;top:430.0px;font-size:9.5px;color:#000;letter-spacing:-0.42px">KIRISLERE ROT ile</div>
<div class="t" style="left:643.5px;top:443.5px;font-size:9.5px;color:#000;letter-spacing:-0.32px">BAGLANTILI</div>
<div class="t" style="left:767.6px;top:417.4px;font-size:9.5px;color:#000;letter-spacing:-0.47px">BASLIK PERDELI,</div>
<div class="t" style="left:767.6px;top:430.0px;font-size:9.5px;color:#000;letter-spacing:-0.39px">KIRISLERIN KIRILARAK</div>
<div class="t" style="left:767.6px;top:443.5px;font-size:9.5px;color:#000;letter-spacing:-0.66px">PERDE TESKILI</div>
<div class="t" style="left:653.5px;top:567.1px;font-size:9.5px;color:#000;letter-spacing:-0.53px">ROT CAPI</div>
<div class="t" style="left:701.0px;top:567.1px;font-size:9.5px;color:#000;letter-spacing:0.34px">mm</div>
<div class="t" style="left:899.0px;top:399.2px;font-size:9.5px;color:#8c0014;letter-spacing:-0.46px">BASLIK BOLGESI MEVCUT KOLONLU PANEL PERDELER</div>
<div class="t" style="left:917.4px;top:420.5px;font-size:9.5px;color:#000;letter-spacing:-0.40px">KIRISLERE ROT ile</div>
<div class="t" style="left:915.4px;top:433.2px;font-size:9.5px;color:#000;letter-spacing:-0.27px">BAGLANTILI</div>
<div class="t" style="left:1043.4px;top:420.5px;font-size:9.5px;color:#000;letter-spacing:-0.38px">KIRISLERIN KIRILARAK</div>
<div class="t" style="left:1043.4px;top:433.2px;font-size:9.5px;color:#000;letter-spacing:-0.67px">PERDE TESKILI</div>
<div class="t" style="left:918.2px;top:565.7px;font-size:9.5px;color:#000;letter-spacing:-0.52px">ROT ARALIGI</div>
<div class="t" style="left:978.0px;top:565.7px;font-size:9.5px;color:#000;letter-spacing:0.66px">cm</div>
<div class="t" style="left:626.1px;top:609.4px;font-size:9.5px;color:#000;letter-spacing:-0.67px">KOLON</div>
<div class="t" style="left:662.0px;top:609.4px;font-size:9.5px;color:#000;letter-spacing:-0.09px">min. BOYUNA DONATI ORANI</div>
<div class="t" style="left:626.1px;top:630.4px;font-size:9.5px;color:#000;letter-spacing:-0.63px">KOLON DONATI GERCEKLESME</div>
<div class="t" style="left:765.0px;top:630.4px;font-size:9.5px;color:#000;letter-spacing:-0.42px">ORANI</div>
<div class="t" style="left:798.0px;top:630.4px;font-size:9.5px;color:#000;letter-spacing:-0.25px">%</div>
<div class="t" style="left:626.1px;top:652.5px;font-size:9.5px;color:#000;letter-spacing:-0.69px">PERDE DONATI GERCEKLESME</div>
<div class="t" style="left:762.0px;top:652.5px;font-size:9.5px;color:#000;letter-spacing:-0.42px">ORANI</div>
<div class="t" style="left:795.0px;top:652.5px;font-size:9.5px;color:#000;letter-spacing:-0.75px">%</div>
<div class="t" style="left:624.3px;top:680.3px;font-size:9.5px;color:#000;letter-spacing:-0.54px">STATIKCE</div>
<div class="t" style="left:669.0px;top:680.3px;font-size:9.5px;color:#000;letter-spacing:-0.31px">GEREKLI</div>
<div class="t" style="left:712.0px;top:680.3px;font-size:9.5px;color:#000;letter-spacing:-0.15px">KESITE gore betonarme hesap</div>
<div class="t" style="left:624.3px;top:699.7px;font-size:9.5px;color:#000;letter-spacing:0.02px">KOLON BURKULMASINDA sadece E1 gore hesap</div>
<div class="t" style="left:624.3px;top:717.2px;font-size:9.5px;color:#000;letter-spacing:-0.04px">Etriye kancalarinin 90° kapatilmasi, Rosh %30</div>
<div class="t" style="left:823.0px;top:717.2px;font-size:9.5px;color:#000;letter-spacing:-0.22px">azaltma</div>
<div class="t" style="left:915.2px;top:605.4px;font-size:9.5px;color:#000;letter-spacing:-0.26px">KOLON AKTIF,</div>
<div class="t" style="left:984.0px;top:605.4px;font-size:9.5px;color:#000;letter-spacing:-0.24px">MANTO PASIF</div>
<div class="t" style="left:915.2px;top:620.2px;font-size:9.5px;color:#000;letter-spacing:-0.26px">KOLON AKTIF,</div>
<div class="t" style="left:984.0px;top:620.2px;font-size:9.5px;color:#000;letter-spacing:-0.21px">MANTO AKTIF</div>
<div class="t" style="left:915.2px;top:635.8px;font-size:9.5px;color:#000;letter-spacing:-0.29px">KOLON PASIF,</div>
<div class="t" style="left:984.0px;top:635.8px;font-size:9.5px;color:#000;letter-spacing:-0.21px">MANTO AKTIF</div>
<div class="t" style="left:916.8px;top:653.4px;font-size:9.5px;color:#000;letter-spacing:-0.48px">KOLON+MANTO KAPASITE KONTROLU</div>
<div class="t" style="left:897.9px;top:688.6px;font-size:9px;color:#000;letter-spacing:0.14px">Hafif hasarlı elemanların katılım oranı</div>
<div class="t" style="left:1062.2px;top:688.6px;font-size:9px;color:#000;letter-spacing:0.28px">Wk &lt; 1mm %</div>
<div class="t" style="left:897.9px;top:705.9px;font-size:9px;color:#000;letter-spacing:0.07px">Orta hasarlı elemanların katılım oranı</div>
<div class="t" style="left:1061.1px;top:705.9px;font-size:9px;color:#000;letter-spacing:0.26px">Wk &lt; 5mm %</div>
<div class="t" style="left:897.9px;top:722.1px;font-size:9px;color:#000;letter-spacing:0.03px">Ağır hasarlı elemanların katılım oranı</div>
<div class="t" style="left:1062.2px;top:722.1px;font-size:9px;color:#000;letter-spacing:0.28px">Wk &gt; 5mm %</div>
<div class="t" style="left:620.2px;top:754.6px;font-size:10px;color:#80000e;letter-spacing:0.55px;font-weight:bold">(E2-E9) MEVCUT YAPI TASARIM STANDARDI</div>
<div class="t" style="left:639.6px;top:770.4px;font-size:10.5px;color:#000;letter-spacing:0.65px;font-weight:bold">TBDY2018-TDY2007-TDY1997,TS500 (2000)</div>
<div class="t" style="left:922.8px;top:770.4px;font-size:10.5px;color:#000;letter-spacing:0.72px;font-weight:bold">TDY1975,TS500 (1984)</div>
<div class="t" style="left:1102.1px;top:770.4px;font-size:10.5px;color:#000;letter-spacing:0.82px;font-weight:bold">ACI318</div>
<div class="a" style="left:624.4px;top:388.7px;width:105.6px;height:4px;background:#f0f0f0"></div>
<div class="t" style="left:627.4px;top:384.4px;font-size:9.5px;color:#c8001c;letter-spacing:-0.07px">PERDE OPSIYONLARI</div>
<div class="a" style="left:896.0px;top:388.7px;width:146.6px;height:4px;background:#f0f0f0"></div>
<div class="t" style="left:899.0px;top:384.4px;font-size:9.5px;color:#c8001c;letter-spacing:0.03px">PANEL ELEMAN OPSIYONLARI</div>
<div class="a" style="left:624.0px;top:594.3px;width:115.0px;height:4px;background:#f0f0f0"></div>
<div class="t" style="left:627.0px;top:590.0px;font-size:9.5px;color:#c8001c;letter-spacing:0.25px">MEVCUT KOLONLARIN</div>
<div class="a" style="left:738.0px;top:594.3px;width:60.0px;height:4px;background:#f0f0f0"></div>
<div class="t" style="left:741.0px;top:590.0px;font-size:9.5px;color:#c8001c;letter-spacing:-0.65px">OZELLIKLERI</div>
<div class="a" style="left:897.4px;top:593.5px;width:43.6px;height:4px;background:#f0f0f0"></div>
<div class="t" style="left:900.4px;top:589.2px;font-size:9.5px;color:#c8001c;letter-spacing:0.49px">MANTO</div>
<div class="a" style="left:940.0px;top:593.5px;width:38.0px;height:4px;background:#f0f0f0"></div>
<div class="t" style="left:943.0px;top:589.2px;font-size:9.5px;color:#c8001c;letter-spacing:-0.35px">DUSEY</div>
<div class="a" style="left:978.0px;top:593.5px;width:26.0px;height:4px;background:#f0f0f0"></div>
<div class="t" style="left:981.0px;top:589.2px;font-size:9.5px;color:#c8001c;letter-spacing:-0.18px">YUK</div>
<div class="a" style="left:1003.0px;top:593.5px;width:57.8px;height:4px;background:#f0f0f0"></div>
<div class="t" style="left:1006.0px;top:589.2px;font-size:9.5px;color:#c8001c;letter-spacing:0.08px">OPSIYONU</div>
<div class="a" style="left:897.4px;top:677.6px;width:226.2px;height:4px;background:#f0f0f0"></div>
<div class="t" style="left:900.4px;top:673.3px;font-size:9.5px;color:#a8001c;letter-spacing:-0.11px">HASARLI ELEMANLARIN ANALIZE KATILIM ORANI</div>
<!--/DLG-->
</body>
</html>
